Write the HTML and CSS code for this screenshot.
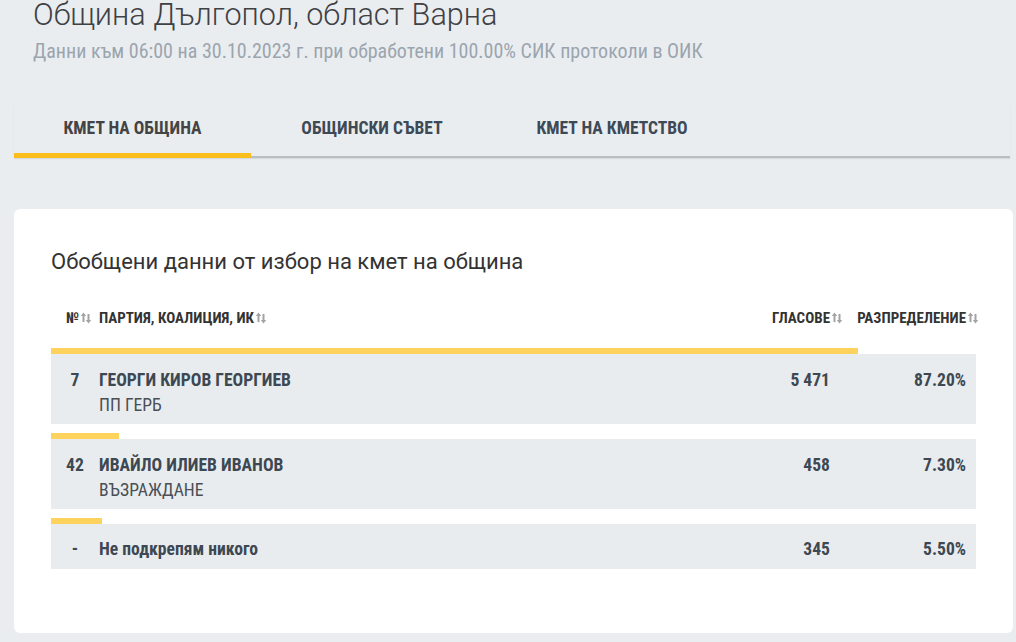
FILE: index.html
```html
<!DOCTYPE html>
<html lang="bg">
<head>
<meta charset="utf-8">
<title>Община Дългопол</title>
<link rel="stylesheet" href="styles.css">
</head>
<body>
<header class="page-head">
  <h1 class="title">Община Дългопол, област Варна</h1>
  <p class="subtitle">Данни към 06:00 на 30.10.2023 г. при обработени 100.00% СИК протоколи в ОИК</p>
</header>

<nav class="tabs">
  <a class="tab tab-1 active">КМЕТ НА ОБЩИНА</a>
  <a class="tab tab-2">ОБЩИНСКИ СЪВЕТ</a>
  <a class="tab tab-3">КМЕТ НА КМЕТСТВО</a>
</nav>

<section class="card">
  <h2 class="card-title">Обобщени данни от избор на кмет на община</h2>
  <div class="table">
    <div class="thead">
      <div class="th th-num">№<svg class="sort" viewBox="0 0 12 12"><path d="M3.5 0.5 L0.8 4 H2.5 V10 H4.5 V4 H6.2 Z"/><path d="M8.5 11.5 L5.8 8 H7.5 V2 H9.5 V8 H11.2 Z"/></svg></div>
      <div class="th th-name">ПАРТИЯ, КОАЛИЦИЯ, ИК<svg class="sort" viewBox="0 0 12 12"><path d="M3.5 0.5 L0.8 4 H2.5 V10 H4.5 V4 H6.2 Z"/><path d="M8.5 11.5 L5.8 8 H7.5 V2 H9.5 V8 H11.2 Z"/></svg></div>
      <div class="th th-votes">ГЛАСОВЕ<svg class="sort overhang" viewBox="0 0 12 12"><path d="M3.5 0.5 L0.8 4 H2.5 V10 H4.5 V4 H6.2 Z"/><path d="M8.5 11.5 L5.8 8 H7.5 V2 H9.5 V8 H11.2 Z"/></svg></div>
      <div class="th th-pct">РАЗПРЕДЕЛЕНИЕ<svg class="sort overhang" viewBox="0 0 12 12"><path d="M3.5 0.5 L0.8 4 H2.5 V10 H4.5 V4 H6.2 Z"/><path d="M8.5 11.5 L5.8 8 H7.5 V2 H9.5 V8 H11.2 Z"/></svg></div>
    </div>

    <div class="entry">
      <div class="bar" style="width:87.2%"></div>
      <div class="row">
        <div class="num">7</div>
        <div class="name"><div class="cand">ГЕОРГИ КИРОВ ГЕОРГИЕВ</div><div class="party">ПП ГЕРБ</div></div>
        <div class="votes">5 471</div>
        <div class="pct">87.20%</div>
      </div>
    </div>

    <div class="entry">
      <div class="bar" style="width:7.3%"></div>
      <div class="row">
        <div class="num">42</div>
        <div class="name"><div class="cand">ИВАЙЛО ИЛИЕВ ИВАНОВ</div><div class="party">ВЪЗРАЖДАНЕ</div></div>
        <div class="votes">458</div>
        <div class="pct">7.30%</div>
      </div>
    </div>

    <div class="entry">
      <div class="bar" style="width:5.5%"></div>
      <div class="row short">
        <div class="num">-</div>
        <div class="name"><div class="cand">Не подкрепям никого</div></div>
        <div class="votes">345</div>
        <div class="pct">5.50%</div>
      </div>
    </div>
  </div>
</section>
</body>
</html>
```

FILE: styles.css
```css
* { box-sizing: border-box; }
html, body { margin: 0; padding: 0; }
body {
  background: #eaedf0;
  font-family: "Roboto Condensed", "Liberation Sans Narrow", Roboto, "Liberation Sans", sans-serif;
  color: #3d4852;
  width: 1016px;
  height: 642px;
  overflow: hidden;
}
.page-head { padding-left: 33px; }
.title {
  margin: 0;
  font-family: Roboto, sans-serif;
  font-weight: 300;
  font-size: 30.6px;
  line-height: 30px;
  color: #3f4145;
}
.subtitle {
  margin: 9px 0 0;
  font-size: 20px;
  line-height: 24px;
  color: #9ba5ae;
}
.tabs {
  display: flex;
  margin: 41px 6px 0 14px;
  border-bottom: 2px solid #b9bec3;
  box-shadow: 0 1px 1px rgba(0,0,0,0.08);
}
.tab {
  text-align: center;
  font-weight: 700;
  font-size: 17.5px;
  line-height: 20px;
  padding: 14px 0 15px;
  color: #3d4a55;
  margin-bottom: -2px;
  border-bottom: 5px solid transparent;
  white-space: nowrap;
}
.tab-1 { width: 237px; }
.tab-2 { width: 242px; }
.tab-3 { width: 238px; }
.tab.active { color: #444; border-bottom-color: #fbbf1d; }
.card {
  margin: 51px 3px 0 14px;
  background: #fff;
  border-radius: 6px;
  padding: 38px 37px 0 37px;
  height: 424px;
}
.card-title {
  margin: 0;
  font-family: Roboto, sans-serif;
  font-weight: 400;
  font-size: 22px;
  line-height: 30px;
  color: #333;
}
.table { width: 925px; }
.thead {
  display: flex;
  align-items: center;
  height: 66px;
  padding-top: 19px;
  padding-bottom: 3px;
  font-size: 15px;
  font-weight: 700;
  color: #333;
}
.th { display: flex; align-items: center; white-space: nowrap; }
.th-num { width: 48px; padding-left: 15px; }
.th-name { flex: 1; }
.th-votes { width: 110px; justify-content: flex-end; padding-right: 9px; }
.th-pct { width: 137px; justify-content: flex-end; padding-right: 10px; }
.sort { width: 12px; height: 12px; fill: #a3a3a3; margin-left: 1px; flex: none; }
.sort.overhang { margin-right: -13px; }
.entry { margin-top: 5px; }
.entry + .entry { margin-top: 9px; }
.bar { height: 6px; background: #fdd35d; }
.row {
  display: flex;
  align-items: flex-start;
  background: #e9ecef;
  height: 70px;
  padding-top: 16px;
  font-size: 17.6px;
  line-height: 20px;
}
.row.short { height: 45px; padding-top: 15px; }
.num { width: 48px; text-align: center; font-weight: 700; }
.name { flex: 1; }
.cand { font-weight: 700; }
.party { margin-top: 5px; color: #4a4f55; }
.votes { width: 110px; text-align: right; font-weight: 700; padding-right: 9px; }
.pct { width: 137px; text-align: right; font-weight: 700; padding-right: 10px; }
```
